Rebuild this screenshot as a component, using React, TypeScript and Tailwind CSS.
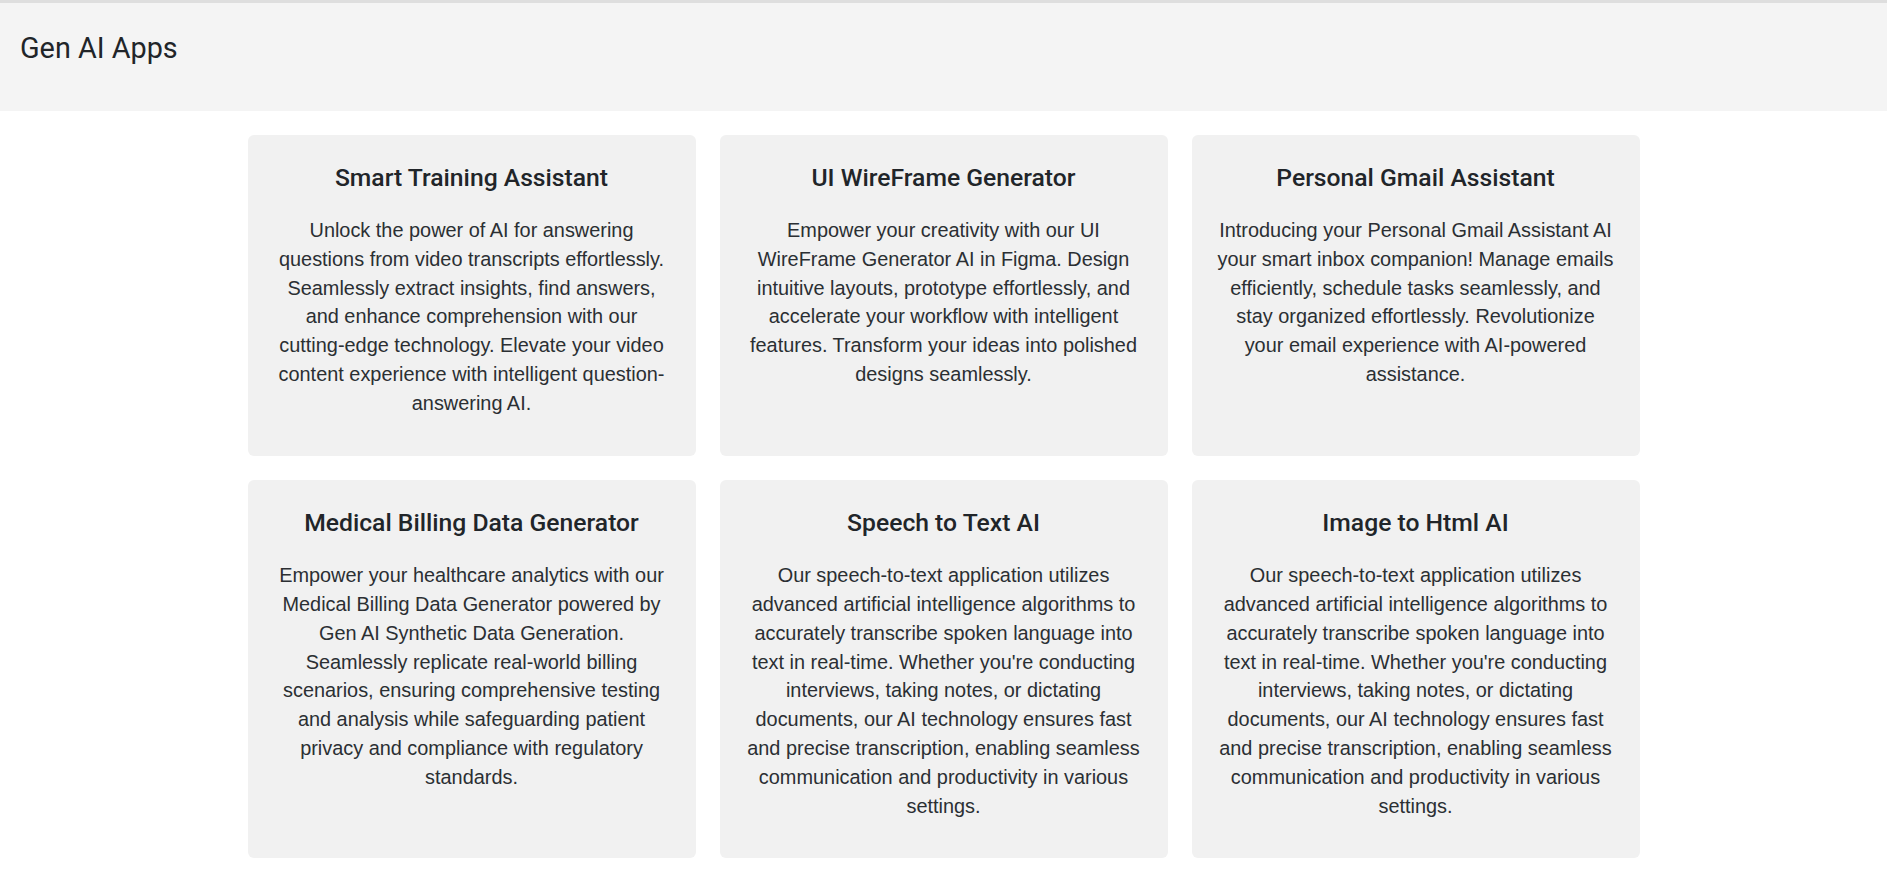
import React from "react";

const apps = [
  {
    title: "Smart Training Assistant",
    text: "Unlock the power of AI for answering questions from video transcripts effortlessly. Seamlessly extract insights, find answers, and enhance comprehension with our cutting-edge technology. Elevate your video content experience with intelligent question-answering AI.",
  },
  {
    title: "UI WireFrame Generator",
    text: "Empower your creativity with our UI WireFrame Generator AI in Figma. Design intuitive layouts, prototype effortlessly, and accelerate your workflow with intelligent features. Transform your ideas into polished designs seamlessly.",
  },
  {
    title: "Personal Gmail Assistant",
    text: "Introducing your Personal Gmail Assistant AI your smart inbox companion! Manage emails efficiently, schedule tasks seamlessly, and stay organized effortlessly. Revolutionize your email experience with AI-powered assistance.",
  },
  {
    title: "Medical Billing Data Generator",
    text: "Empower your healthcare analytics with our Medical Billing Data Generator powered by Gen AI Synthetic Data Generation. Seamlessly replicate real-world billing scenarios, ensuring comprehensive testing and analysis while safeguarding patient privacy and compliance with regulatory standards.",
  },
  {
    title: "Speech to Text AI",
    text: "Our speech-to-text application utilizes advanced artificial intelligence algorithms to accurately transcribe spoken language into text in real-time. Whether you're conducting interviews, taking notes, or dictating documents, our AI technology ensures fast and precise transcription, enabling seamless communication and productivity in various settings.",
  },
  {
    title: "Image to Html AI",
    text: "Our speech-to-text application utilizes advanced artificial intelligence algorithms to accurately transcribe spoken language into text in real-time. Whether you're conducting interviews, taking notes, or dictating documents, our AI technology ensures fast and precise transcription, enabling seamless communication and productivity in various settings.",
  },
];

const App = () => {
  return (
    <div className="min-h-screen bg-white font-['Liberation_Sans',Arial,sans-serif] text-[#212529]">
      {/* Header */}
      <header className="border-t-[3px] border-[#dedede] bg-[#f4f4f4] pl-5 pt-[28px] pb-[45px]">
        <h3 className="font-['Roboto',sans-serif] text-[28.8px] font-normal leading-[1.2] text-[#212529]">
          Gen AI Apps
        </h3>
      </header>

      {/* Cards */}
      <div className="mx-auto mt-[24px] grid w-[1392px] grid-cols-3 gap-6">
        {apps.map((app, idx) => (
          <div
            key={idx}
            className="rounded-md bg-[#f1f1f1] px-[24.5px] pt-[25px] pb-[38px] text-center"
          >
            <h5 className="font-['Roboto',sans-serif] text-[24.7px] font-medium leading-[36px] text-[#212529]">
              {app.title}
            </h5>
            <p className="mt-[20.5px] text-[19.9px] leading-[28.8px] text-[#2b2f33]">
              {app.text}
            </p>
          </div>
        ))}
      </div>
    </div>
  );
};

export default App;
